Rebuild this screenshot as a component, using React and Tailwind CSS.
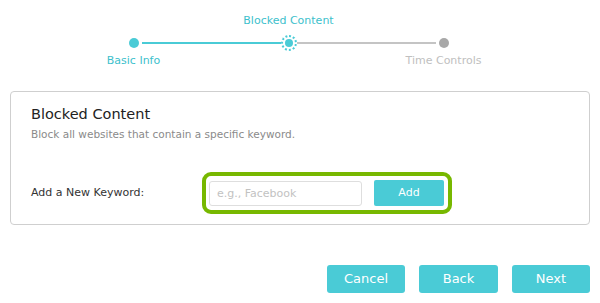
import React from 'react';

const font = { fontFamily: '"DejaVu Sans", Tahoma, Verdana, sans-serif' };

const steps = [
    { label: 'Basic Info', state: 'done' },
    { label: 'Blocked Content', state: 'active' },
    { label: 'Time Controls', state: 'todo' },
];

const Step = ({ step, index }) => {
    const leftLine = index === 0 ? 'bg-transparent' : step.state === 'todo' ? 'bg-[#c4c4c4]' : 'bg-[#4acbd6]';
    const rightLine = index === steps.length - 1 ? 'bg-transparent' : step.state === 'done' ? 'bg-[#4acbd6]' : 'bg-[#c4c4c4]';
    const labelColor = step.state === 'todo' ? 'text-[#c0c0c0]' : 'text-[#3dbfcc]';
    const label = <span className={`text-[11px] leading-[14px] whitespace-nowrap ${labelColor}`}>{step.label}</span>;
    return (
        <div className="w-[155px] flex flex-col items-center">
            <div className="h-[14px] flex items-end">{index % 2 === 1 && label}</div>
            <div className="flex items-center w-full h-[30px]">
                <div className={`flex-1 h-[2px] ${leftLine}`} />
                {step.state === 'active' ? (
                    <div className="w-[16px] h-[16px] rounded-full border-2 border-dotted border-[#4acbd6] flex items-center justify-center">
                        <div className="w-[8px] h-[8px] rounded-full bg-[#4acbd6]" />
                    </div>
                ) : (
                    <div className={`w-[10px] h-[10px] rounded-full mx-[3px] ${step.state === 'done' ? 'bg-[#4acbd6]' : 'bg-[#a8a8a8]'}`} />
                )}
                <div className={`flex-1 h-[2px] ${rightLine}`} />
            </div>
            <div className="h-[14px] flex items-start -mt-[4px]">{index % 2 === 0 && label}</div>
        </div>
    );
};

const Button = ({ children, w = 'w-[78px]' }) => (
    <button className={`${w} h-[28px] bg-[#4acbd6] text-white text-[13px] rounded-[3px]`}>{children}</button>
);

export default function App() {
    return (
        <div className="w-[600px] h-[303px] bg-white overflow-hidden" style={font}>
            <div className="flex pl-[56px] pt-[14px]">
                {steps.map((s, i) => <Step key={s.label} step={s} index={i} />)}
            </div>
            <div className="mx-[10px] mt-[23px] h-[134px] border border-[#cfcfcf] rounded-[4px] px-[20px] pt-[12px]">
                <h3 className="text-[14.5px] text-[#222] leading-[20px]">Blocked Content</h3>
                <p className="text-[10.5px] text-[#8a8a8a] mt-[3px] leading-[15px]">Block all websites that contain a specific keyword.</p>
                <div className="flex items-center mt-[30px]">
                    <label className="text-[11px] text-[#333] w-[171px]">Add a New Keyword:</label>
                    <div className="flex items-center gap-[12px] border-[4px] border-[#77b800] rounded-[9px] px-[3px] py-[4px] w-[250px] h-[42px]">
                        <input className="w-[153px] h-[25px] border border-[#dedede] rounded-[3px] px-[7px] text-[11px] outline-none placeholder:text-[#c2c2c2]" placeholder="e.g., Facebook" />
                        <button className="w-[70px] h-[26px] bg-[#4acbd6] text-white text-[11px] rounded-[2px]">Add</button>
                    </div>
                </div>
            </div>
            <div className="flex justify-end gap-[14px] mr-[10px] mt-[40px]">
                <Button>Cancel</Button>
                <Button w="w-[79px]">Back</Button>
                <Button>Next</Button>
            </div>
        </div>
    );
}
